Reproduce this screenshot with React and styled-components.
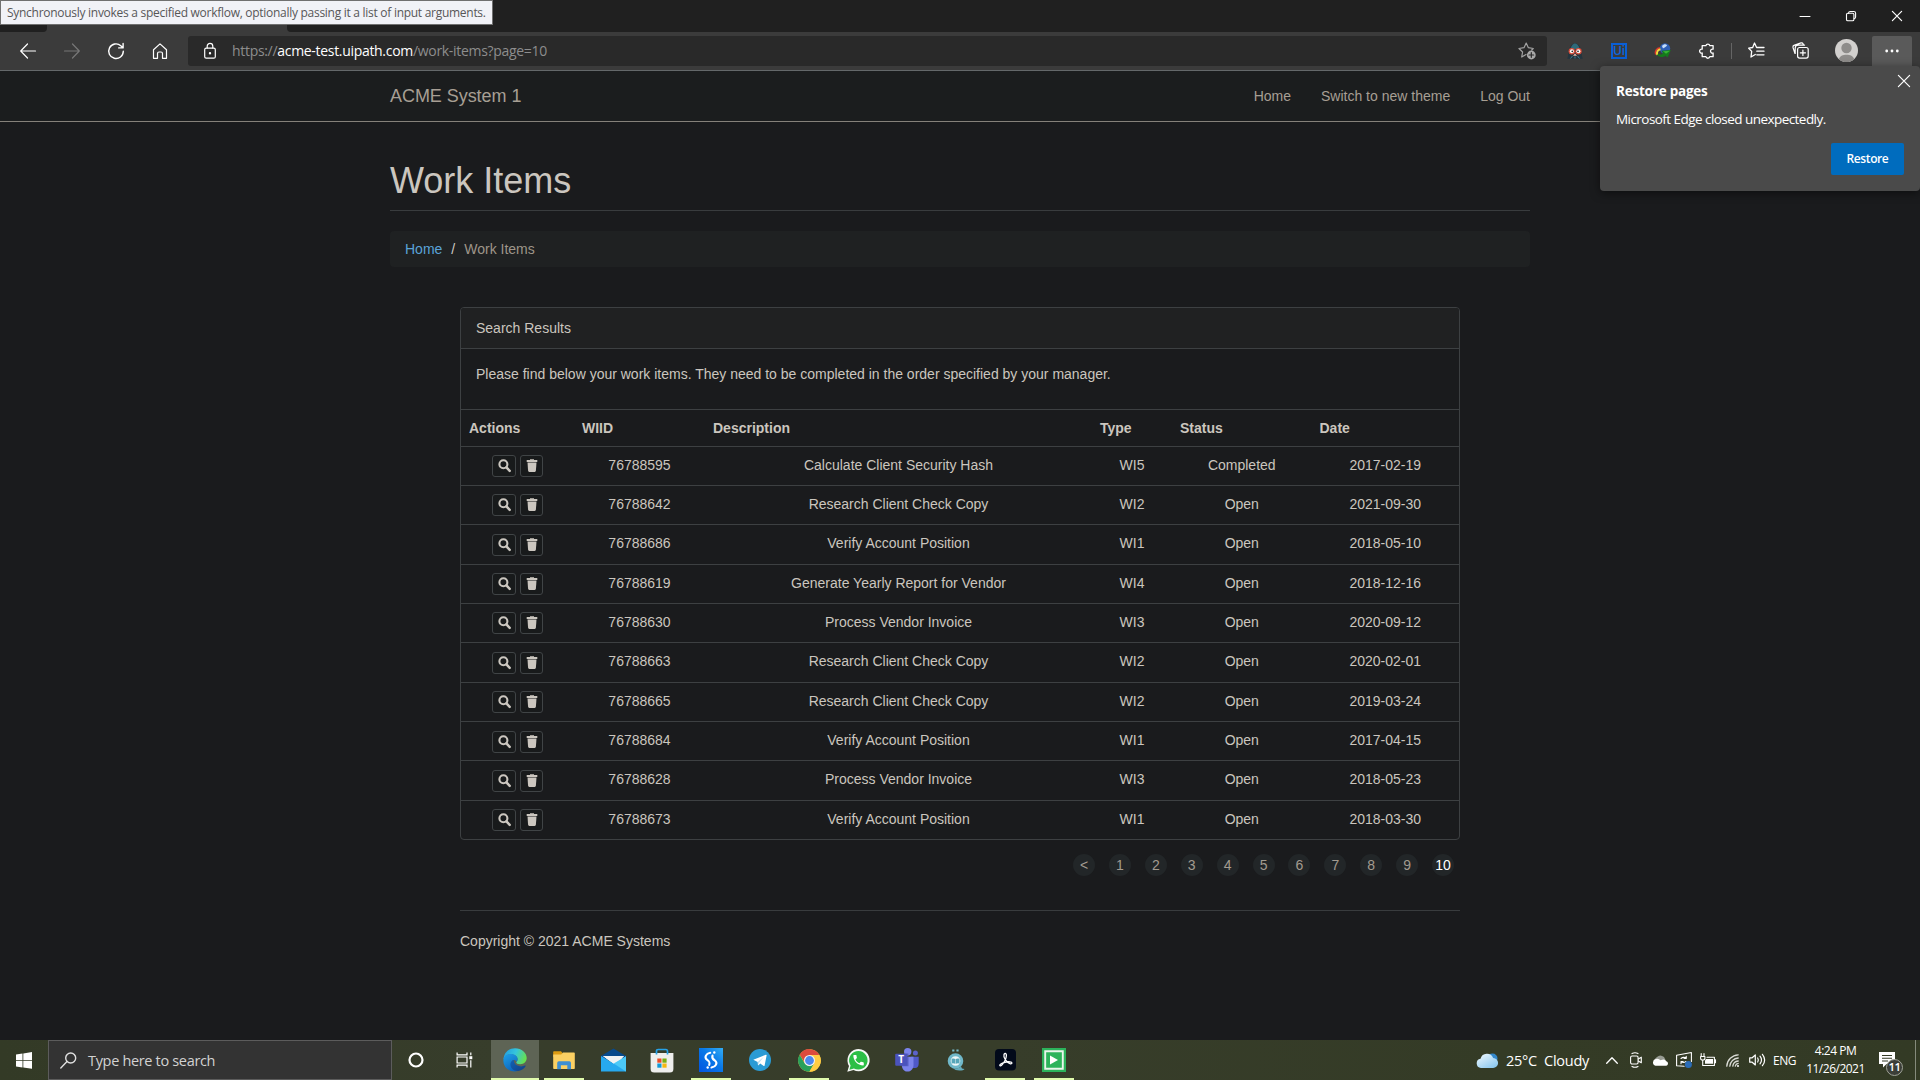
import React from "react";
import styled, { createGlobalStyle } from "styled-components";

const UI = '"Open Sans", "Noto Sans", sans-serif';
const PAGE = '"Liberation Sans", Arial, sans-serif';

const GlobalStyle = createGlobalStyle`
  *, *::before, *::after { box-sizing: border-box; }
  html, body { margin: 0; padding: 0; background: #1a1b1d; overflow: hidden; }
  svg { display: block; flex: none; overflow: visible; }
`;

const Screen = styled.div`
  position: relative;
  display: flex;
  flex-direction: column;
  width: 1920px;
  height: 1080px;
  overflow: hidden;
  background: #1a1b1d;
  font-family: ${UI};
`;

/* ---------- browser chrome ---------- */
const TitleBar = styled.header`
  display: flex;
  height: 32px;
  flex: none;
  background: #3b3b3b;
`;
const TabGap = styled.div`
  width: 47px;
  background: #202020;
  border-bottom-right-radius: 4px;
`;
const ActiveTab = styled.div`
  width: 240px;
  background: #3b3b3b;
`;
const TabStrip = styled.div`
  flex: 1;
  display: flex;
  justify-content: flex-end;
  background: #202020;
  border-bottom-left-radius: 4px;
`;
const WindowButton = styled.div`
  width: 46px;
  display: flex;
  align-items: center;
  justify-content: center;
`;
const Toolbar = styled.div`
  display: flex;
  align-items: center;
  height: 39px;
  flex: none;
  padding: 0 8px 1px 6px;
  background: #3b3b3b;
  border-bottom: 1px solid #64686a;
`;
const Slot = styled.div`
  width: ${(p) => p.$w || 44}px;
  height: 30px;
  display: flex;
  align-items: center;
  justify-content: center;
`;
const AddressBar = styled.div`
  display: flex;
  align-items: center;
  width: 1359px;
  height: 30px;
  margin: 0 6px;
  padding: 0 11px 0 16px;
  border-radius: 3px;
  background: #292929;
`;
const Url = styled.div`
  flex: 1;
  margin-left: 16px;
  font-size: 14px;
  line-height: 20px;
  letter-spacing: -0.31px;
  color: #8d8d8d;
  white-space: nowrap;
`;
const Host = styled.span`
  color: #ffffff;
`;
const Divider = styled.div`
  width: 1px;
  height: 16px;
  margin: 0 2px;
  background: #656565;
`;
const MoreButton = styled(Slot)`
  width: 40px;
  margin-left: 2px;
  border-radius: 2px 2px 0 0;
  background: #5a5a5a;
`;
const UiBadge = styled.div`
  width: 16px;
  height: 16px;
  display: flex;
  align-items: center;
  justify-content: center;
  border: 2px solid #0a5fd6;
  color: #0a67e0;
  font: 600 12px/12px ${UI};
`;
const Tooltip = styled.div`
  position: absolute;
  left: 0;
  top: 0;
  width: 493px;
  height: 25px;
  padding-left: 6px;
  border: 1px solid #707070;
  background: #f1f2f7;
  color: #575757;
  font-size: 12px;
  line-height: 23px;
  letter-spacing: -0.28px;
  white-space: nowrap;
`;
const Popup = styled.section`
  position: absolute;
  left: 1600px;
  top: 66px;
  width: 320px;
  height: 125px;
  padding: 15px 16px;
  display: flex;
  flex-direction: column;
  border-radius: 4px;
  background: #4a4a4a;
  color: #ffffff;
  box-shadow: 0 2px 10px rgba(0, 0, 0, 0.5);
`;
const PopupHead = styled.div`
  display: flex;
  height: 20px;
  justify-content: space-between;
  font-size: 13.5px;
  font-weight: 700;
  line-height: 20px;
  letter-spacing: -0.22px;
  svg { margin: -6px -6px 0 0; }
`;
const PopupText = styled.div`
  margin-top: 8px;
  font-size: 13.5px;
  line-height: 20px;
  letter-spacing: -0.55px;
`;
const RestoreButton = styled.div`
  width: 73px;
  height: 32px;
  margin: 14px 0 0 auto;
  border-radius: 2px;
  background: #006cbe;
  font-size: 12px;
  font-weight: 600;
  line-height: 32px;
  letter-spacing: -0.4px;
  text-align: center;
`;

/* ---------- page ---------- */
const Page = styled.main`
  flex: 1;
  font-family: ${PAGE};
  font-size: 14px;
  line-height: 20px;
  color: #cbc6bf;
`;
const Navbar = styled.nav`
  height: 51px;
  padding: 0 390px;
  display: flex;
  align-items: center;
  justify-content: space-between;
  background: #1b1d1e;
  border-bottom: 1px solid #85817a;
  color: #a79f94;
`;
const Brand = styled.div`
  font-size: 18px;
  letter-spacing: -0.05px;
`;
const NavLinks = styled.div`
  display: flex;
  gap: 30px;
`;
const Container = styled.div`
  width: 1140px;
  margin: 0 auto;
`;
const PageTitle = styled.h1`
  height: 89px;
  margin: 0 0 20px;
  padding-top: 39px;
  border-bottom: 1px solid #393c3e;
  font-size: 36px;
  font-weight: 400;
  line-height: 40px;
`;
const Breadcrumb = styled.div`
  display: flex;
  height: 36px;
  padding: 8px 15px;
  border-radius: 4px;
  background: #1f2122;
  color: #9e9589;
`;
const Crumb = styled.span`
  color: #5aa3d8;
`;
const Slash = styled.span`
  padding: 0 9px;
  color: #d0cbc4;
`;
const Column = styled.div`
  width: 1000px;
  margin: 40px auto 0;
`;
const Panel = styled.section`
  border: 1px solid #3d4042;
  border-radius: 4px;
  height: 533px;
  overflow: hidden;
`;
const PanelHeading = styled.div`
  height: 41px;
  padding: 10px 15px;
  background: #202122;
  border-bottom: 1px solid #3d4042;
`;
const PanelBody = styled.div`
  height: 59.6px;
  padding: 15px;
`;
const Row = styled.div`
  display: grid;
  grid-template-columns: 113px 131px 387px 80px 139.5px 147.5px;
  height: ${(p) => (p.$head ? "37px" : "39.37px")};
  border-top: 1px solid #3d4042;
`;
const HeadCell = styled.div`
  padding: 8px;
  font-weight: 700;
`;
const Cell = styled.div`
  padding: 8px;
  text-align: center;
`;
const Actions = styled.div`
  display: flex;
  gap: 4px;
  padding: 8.4px 0 0 31px;
`;
const IconButton = styled.div`
  width: ${(p) => p.$w}px;
  height: 22px;
  display: flex;
  align-items: center;
  justify-content: center;
  padding-bottom: 1px;
  border: 1px solid #404446;
  border-radius: 3px;
  background: #181a1b;
  color: #cbc6bf;
`;
const Pager = styled.div`
  display: flex;
  justify-content: flex-end;
  gap: 13.9px;
  margin: 14px 6px 0 0;
`;
const PageDot = styled.div`
  width: 22px;
  height: 22px;
  border-radius: 11px;
  background: #222628;
  color: ${(p) => (p.$active ? "#ffffff" : "#a39b90")};
  line-height: 22px;
  text-align: center;
`;
const Footer = styled.footer`
  margin-top: 34px;
  padding-top: 20px;
  border-top: 1px solid #393c3e;
`;

/* ---------- taskbar ---------- */
const Taskbar = styled.footer`
  display: flex;
  height: 40px;
  flex: none;
  background: linear-gradient(90deg, #333a26 0, #373d2b 500px, #373d2a 1000px, #343b26 1500px, #333a25 100%);
  color: #ffffff;
`;
const StartButton = styled.div`
  width: 48px;
  display: flex;
  align-items: center;
  padding-left: 16px;
`;
const SearchBox = styled.div`
  width: 344px;
  display: flex;
  align-items: center;
  gap: 11px;
  padding-left: 11px;
  border: 1px solid #5c5c5c;
  background: #333333;
  color: #d2d2d2;
  font-size: 14.5px;
  letter-spacing: -0.33px;
`;
const TaskIcon = styled.div`
  width: ${(p) => p.$w}px;
  height: 40px;
  display: flex;
  align-items: center;
  justify-content: center;
`;
const TaskApp = styled.div`
  width: ${(p) => (p.$active ? 48 : 40)}px;
  height: 40px;
  margin: ${(p) => (p.$active ? "0 0.5px 0 1px" : "0 4.5px")};
  display: flex;
  align-items: center;
  justify-content: center;
  background: ${(p) => (p.$active ? "#5e6455" : "transparent")};
  border-bottom: 2px solid ${(p) => (p.$open || p.$active ? "#e0fbad" : "transparent")};
  svg { margin-top: 2px; }
`;
const Tray = styled.div`
  flex: 1;
  display: flex;
  align-items: center;
  justify-content: flex-end;
`;
const Weather = styled.div`
  display: flex;
  align-items: center;
  width: 130px;
  font-size: 14.5px;
  letter-spacing: -0.25px;
  white-space: nowrap;
  svg { margin-right: 8px; }
`;
const Temp = styled.span`
  width: 38px;
`;
const Cloudy = styled.span``;
const TrayIcon = styled.div`
  width: ${(p) => p.$w}px;
  display: flex;
  justify-content: center;
`;
const Lang = styled.div`
  width: 41px;
  text-align: center;
  font-size: 12px;
  letter-spacing: -0.4px;
`;
const Clock = styled.div`
  width: 61px;
  text-align: center;
  font-size: 12px;
  line-height: 18px;
  letter-spacing: -0.5px;
  white-space: nowrap;
`;
const Notice = styled.div`
  position: relative;
  width: 49px;
  height: 40px;
  padding: 12px 0 0 13px;
`;
const NoticeCount = styled.div`
  position: absolute;
  left: 20px;
  top: 19px;
  width: 17px;
  height: 17px;
  border: 1px solid #a0a398;
  border-radius: 50%;
  background: #3b3e38;
  font: 600 11.5px/14px ${UI};
  letter-spacing: -0.6px;
  text-align: center;
`;
const ShowDesktop = styled.div`
  width: 5px;
  height: 40px;
  border-left: 1px solid #858a7c;
`;

/* ---------- icons ---------- */
const Line = ({ w = 16, h = w, c = "#fff", s = 1.2, children, ...rest }) => (
  <svg width={w} height={h} viewBox={`0 0 ${w} ${h}`} fill="none" stroke={c} strokeWidth={s} strokeLinecap="round" strokeLinejoin="round" {...rest}>
    {children}
  </svg>
);
const Back = () => <Line><path d="M15.5 8H.8M7.500 1 .7 8l6.800 7" /></Line>;
const Forward = () => <Line c="#777"><path d="M.5 8h14.700M8.500 1l6.800 7-6.800 7" /></Line>;
const Refresh = () => <Line s={1.4}><path d="M15.300 8.200A7.300 7.300 0 1 1 12.800 2.700L15 4.800M15.100.5v4.400h-4.400" /></Line>;
const Home = () => <Line w={16}><path d="M1.500 6.800 8 .9l6.500 5.900V15.300H10.500V10.500Q10.500 9 9 9H7Q5.500 9 5.500 10.500V15.300H1.500Z" /></Line>;
const Lock = () => <Line w={12} h={16}><rect x=".7" y="5.200" width="10.600" height="10" rx="1.500" /><path d="M3.200 5V3.200a2.800 2.800 0 0 1 5.600 0V5" /><circle cx="6" cy="10.200" r=".6" fill="#fff" /></Line>;
const AddFavorite = () => (
  <Line w={18} c="#a2a2a2">
    <path d="M8 12.500 3.700 15l.9-5L1 6.500l5-.8L8.200 1l2.200 4.700 4.900.8-1.600 1.500" />
    <circle cx="13.300" cy="13" r="4.400" fill="#a8a8a8" stroke="none" />
    <path d="M13.300 10.700v4.600M11 13h4.600" stroke="#292929" />
  </Line>
);
const Raven = () => (
  <svg width="16" height="16" viewBox="0 0 16 16">
    <path d="M.3 15.700C1.800 12 .8 8.500 2.500 5 4 1.800 5.800.3 8 .3s4 1.500 5.500 4.700C15.200 8.500 14.200 12 15.800 15.700Z" fill="#24353f" />
    <path d="M3.500 6C4.500 2 6.500.5 8.100.5s3.500 1.500 4.600 5.500Z" fill="#2e6a7a" />
    <circle cx="4.800" cy="8.200" r="3.200" fill="#d84c38" /><circle cx="11.500" cy="8.200" r="3.200" fill="#d84c38" />
    <circle cx="4.900" cy="8.200" r="2" fill="#fff" /><circle cx="11.400" cy="8.200" r="2" fill="#fff" />
    <circle cx="5.300" cy="8.300" r=".9" fill="#333" /><circle cx="11" cy="8.300" r=".9" fill="#333" />
    <path d="m6 12.800 2-2.300 2 2.300Z" fill="#f4b9a8" />
    <path d="M3.500 15.500 5.500 13M8 15.500V13.500M12.500 15.500 10.500 13" stroke="#3c7d90" strokeWidth="1" />
  </svg>
);
const Idm = () => (
  <svg width="16" height="15" viewBox="0 0 16 15">
    <circle cx="10" cy="5.500" r="5.200" fill="#2e5fb4" /><path d="M7 3C8.500.8 11 .8 11.800 2S9.500 4.500 8 5.500Z" fill="#c4dcfa" />
    <path d="M.8 11.500C-.5 8 2 5.200 5 4.800" fill="none" stroke="#d8382e" strokeWidth="1.700" />
    <path d="M2.300 12C1.300 8.700 3 6.700 5.500 6.200" fill="none" stroke="#f0d83c" strokeWidth="1.900" />
    <path d="M3 10.500c1.500 1.300 3.500 1.300 5-.3L6.500 7.800l9.300-.8-3.200 7.500-2-1.800C8 14.800 4.500 14.300 2.300 12.200Z" fill="#157a1c" />
    <path d="m8 8.300 7-.6-4 3Z" fill="#38b534" />
  </svg>
);
const Puzzle = () => <Line s={1.3}><path d="M5.300 2.600h1.600a2 2 0 0 1 3.900 0h3.300v3.600a2 2 0 1 0 0 3.800v3.700h-3.300a2 2 0 0 1-3.900 0H3.200v-3.700a2 2 0 1 1 0-3.800V2.600Z" /></Line>;
const Favorites = () => <Line w={17} s={1.3}><path d="M8.600 5.500 6.500 1 4.700 5.500.7 6.200l3 3.200L3 15l4.300-2.500M8.700 5.500H16M8.800 9.200H16M8.800 12.800H16" /></Line>;
const Collections = () => <Line w={17} s={1.2}><rect x="5.600" y="5.500" width="10.600" height="10.600" rx="2" /><path d="M10.900 8.200v5.200M8.300 10.800h5.200M3 11.500 1 5.500Q.6 4 2 3.400L9 .9q1.500-.4 2 .8l.4 1.100M3.200 11.400V6Q3.300 3.200 6 3.100h6.600" /></Line>;
const Avatar = () => (
  <svg width="23" height="23" viewBox="0 0 23 23"><defs><clipPath id="av"><circle cx="11.500" cy="11.500" r="11.500" /></clipPath></defs>
    <g clipPath="url(#av)"><rect width="23" height="23" fill="#d2d0ce" /><circle cx="11.500" cy="9" r="5.200" fill="#8e8c8a" /><path d="M3.500 21.500C4.500 16.800 8 15.800 11.500 15.800s7 1 8 5.700c-3 2-13 2-16 0Z" fill="#8e8c8a" /></g></svg>
);
const Dots = () => <svg width="14" height="4" viewBox="0 0 14 4" fill="#fff"><circle cx="1.700" cy="2" r="1.400" /><circle cx="7" cy="2" r="1.400" /><circle cx="12.300" cy="2" r="1.400" /></svg>;
const Cross = ({ size = 10 }) => <Line w={size} s={1.2}><path d={`M.4.4 ${size - 0.4} ${size - 0.4}M${size - 0.4} .4.4 ${size - 0.4}`} /></Line>;
const Minimize = () => <Line w={10}><path d="M0 5.500h10" strokeWidth="1" /></Line>;
const RestoreWin = () => <Line w={10} s={1.1}><rect x=".5" y="2.300" width="7.400" height="7.400" rx="1.300" /><path d="M2.500 2.200Q2.600.5 4.200.5h3.600q1.800 0 1.800 1.800v3.700q0 1.500-1.600 1.700" /></Line>;

const SearchGlyph = () => <svg width="13" height="13" viewBox="0 0 13 13" fill="none" stroke="currentColor"><circle cx="5.400" cy="5.200" r="4" strokeWidth="2.100" /><path d="m8.400 8.400 3.300 3.400" strokeWidth="2.500" strokeLinecap="round" /></svg>;
const TrashGlyph = () => <svg width="12" height="13" viewBox="0 0 12 13" fill="currentColor"><path d="M4 1V.2h4V1h3.300v2.100H.7V1Z" /><path d="M1.500 3.400h9L9.900 11.800q-.1 1.100-1.200 1.100H3.300q-1.100 0-1.200-1.100Z" /></svg>;

const WindowsLogo = () => <svg width="16" height="17" viewBox="0 0 16 17" fill="#fff"><path d="M0 2.400 6.500 1.500V8H0ZM7.300 1.400 16 .1V8H7.300ZM0 8.800h6.500v6.600L0 14.500ZM7.300 8.800H16v8l-8.700-1.300Z" /></svg>;
const TaskSearch = () => <Line w={17} c="#e0e0e0" s={1.4}><circle cx="10.700" cy="6" r="5" /><path d="M7 9.600.8 16" /></Line>;
const Cortana = () => <svg width="16" height="16" viewBox="0 0 16 16"><circle cx="8" cy="8" r="6.500" fill="none" stroke="#fff" strokeWidth="2.200" /></svg>;
const TaskView = () => <svg width="16" height="16" viewBox="0 0 16 16" fill="none" stroke="#fff" strokeWidth="1.200"><path d="M.1.5v2.300h9.900V.5M.1 15.500v-2.300h9.900v2.300M.1 5h9.900v6H.1ZM13.800.5v2.800M13.800 8.300v7.200" /><path d="M12.300 4.200h3v3h-3Z" fill="#fff" stroke="none" /></svg>;

const Edge = () => (
  <svg width="24" height="24" viewBox="0 0 25 25">
    <defs>
      <linearGradient id="e1" x1="0" y1=".2" x2="1" y2=".5"><stop offset="0" stopColor="#239de0" /><stop offset=".5" stopColor="#35c5dc" /><stop offset="1" stopColor="#67e04f" /></linearGradient>
      <linearGradient id="e2" x1="0" y1="0" x2=".5" y2="1"><stop offset="0" stopColor="#1fa1e8" /><stop offset="1" stopColor="#0d66bd" /></linearGradient>
      <linearGradient id="e3" x1="0" y1="0" x2="1" y2="1"><stop offset="0" stopColor="#1262b5" /><stop offset="1" stopColor="#123f84" /></linearGradient>
    </defs>
    <path d="M.5 12C1 4.500 6 .2 12.500.2c7 0 12.200 4.800 12.200 10.300 0 4-3 6.300-6.700 6.300-3 0-4.200-1-4.200-1.800s1.400-1.200 1.400-3.300c0-3-3-5.200-6.800-5.200C4.500 6.500 1.500 8.500.5 12Z" fill="url(#e1)" />
    <path d="M.4 12.500C.7 8.500 4 6.300 8.200 6.300c3.900 0 7 2.300 7 5.400 0 1.200-.6 2-1.100 2.500-.9-1.600-2.500-2-3.800-1.400-2.300 1.100-2.400 5.300.1 8 1.500 1.700 3.800 2.600 6 2.900C8 26.500 0 21 .4 12.500Z" fill="url(#e2)" />
    <path d="M10.300 12.800c-3.300 1.700-3.300 6-.7 8.900 2.100 2.400 5 2.700 7.500 2 2.900-.9 5.200-2.700 6.400-4.700.4-.6-.1-1-.7-.7-4.300 2-9.700.2-10.900-2.900-.5-1.200-.4-2.300 0-2.900Z" fill="url(#e3)" />
  </svg>
);
const Explorer = () => <svg width="22" height="19" viewBox="0 0 22 19"><path d="M.2 1Q.2.2 1 .2h7L9.500 2v4H.2Z" fill="#de9c12" /><path d="M.2 3.500h8L10 1.500h11q.8 0 .8.800v15q0 .8-.8.800H1q-.8 0-.8-.8Z" fill="#fbd063" /><path d="M4.200 18.200V12q0-1.700 1.700-1.700h10.500Q18 10.300 18 12v6.200h-3.700v-4H7.900v4Z" fill="#3f8fd2" /></svg>;
const Mail = () => <svg width="25" height="24" viewBox="0 0 25 24"><path d="M0 8 12.500.5 25 8v4H0Z" fill="#07498c" /><path d="M2 8h21l-8 10Z" fill="#f0f2f4" /><path d="M0 8 13.500 16 25 8.200V23.500H0Z" fill="#27a9ef" /><path d="M2 8h21L12.700 15.500Z" fill="#f0f2f4" /><path d="M25 8.200V23.500L12.700 15.500Z" fill="#4cc9f8" /></svg>;
const Store = () => <svg width="24" height="25" viewBox="0 0 24 25"><path d="M.6 5h22.800v16q0 3.500-3.500 3.500H4.100Q.6 24.500.6 21Z" fill="#eeeeed" /><path d="M6.500 6.500V3.200Q6.500 1.500 8.200 1.500h7.600q1.700 0 1.700 1.700v3.300" fill="none" stroke="#27a2e8" strokeWidth="1.700" /><path d="M7.300 10.500h4.200v4.200H7.300Z" fill="#ec4b27" /><path d="M12.400 10.500h4.200v4.200h-4.200Z" fill="#78af14" /><path d="M7.300 15.500h4.200v4.200H7.300Z" fill="#119ad9" /><path d="M12.400 15.500h4.200v4.200h-4.200Z" fill="#f5b811" /></svg>;
const Studio = () => <svg width="24" height="24" viewBox="0 0 24 24"><defs><linearGradient id="st" x1="0" y1="1" x2="1" y2="0"><stop stopColor="#0253df" /><stop offset=".55" stopColor="#0878e8" /><stop offset="1" stopColor="#33aef5" /></linearGradient></defs><path d="M0 0h24v24H0Z" fill="url(#st)" /><path d="M11.200 4.800C7 5.500 5 9.300 8 11.700c2 1.500 3.200 2 2.200 5.300M13.500 7.500c-1 2.800.3 3.700 2.400 5 3 2.300 1.200 6.300-3.400 7" fill="none" stroke="#fff" strokeWidth="2.100" strokeLinecap="round" /><circle cx="8.700" cy="19.500" r="1.200" fill="#fff" /><circle cx="15.300" cy="4.500" r="1.200" fill="#fff" /></svg>;
const Telegram = () => <svg width="22" height="22" viewBox="0 0 22 22"><circle cx="11" cy="11" r="11" fill="#2a9bd5" /><path d="m4.300 10.800 12.500-5q1-.3.800.8l-2 9.800q-.2 1-1.200.4l-3.200-2.300-1.700 1.700q-.5.500-.6-.5l-.2-2.800Z" fill="#fff" /><path d="m8.700 12.900 6-5.100-4.700 6.100-.5 2.300Z" fill="#bddff1" /></svg>;
const Chrome = () => (
  <svg width="23" height="23" viewBox="0 0 23 23">
    <circle cx="11.500" cy="11.500" r="11.300" fill="#ffcd43" />
    <path d="M1.700 5.700A11.300 11.300 0 0 1 21.300 5.900H11.500L7 14Z" fill="#dc4b3e" />
    <path d="M1.700 5.700A11.300 11.300 0 0 0 11.400 22.800L16.300 14.300 11.500 17.200 6.600 14.300Z" fill="#28a05b" />
    <path d="M11.400 22.800A11.300 11.300 0 0 0 21.300 5.900H11.500l4.900 8.400Z" fill="#ffcd43" />
    <circle cx="11.500" cy="11.500" r="5.500" fill="#f2f2f2" /><circle cx="11.500" cy="11.500" r="4.400" fill="#4c88ee" />
  </svg>
);
const WhatsApp = () => <svg width="23" height="23" viewBox="0 0 23 23"><path d="M.3 22.700 2 16.900A11.100 11.100 0 1 1 6.500 21.100Z" fill="#f6f8f6" /><path d="m2.400 20.700 1.200-4.200A9.300 9.300 0 1 1 6.900 19.500Z" fill="#2cbf46" /><g transform="translate(4.600 4.200) scale(.58)"><path d="M6.620 10.790c1.440 2.830 3.760 5.140 6.590 6.590l2.200-2.200c.27-.27.67-.36 1.020-.24 1.120.37 2.330.57 3.570.57.55 0 1 .45 1 1V20c0 .55-.45 1-1 1-9.390 0-17-7.610-17-17 0-.55.45-1 1-1h3.500c.55 0 1 .45 1 1 0 1.250.2 2.450.57 3.570.11.35.03.74-.25 1.020l-2.200 2.200z" fill="#fff" /></g></svg>;
const TLetter = styled.text`
  font: 700 10px ${UI};
`;
const Teams = () => <svg width="24" height="24" viewBox="0 0 24 24"><circle cx="20.400" cy="5" r="2.500" fill="#5b62c9" /><path d="M16 8.700h7.700v7c0 3-2 4.500-4 4.200H16Z" fill="#5059c9" /><circle cx="12.700" cy="3.800" r="3.700" fill="#7b83eb" /><path d="M7 8.700h11.500V17c0 4-2.700 6.600-6 6.600S6.800 21 6.800 17Z" fill="#7b83eb" /><path d="M7 8.700h6.500v9.500H7ZM9.400 5.500h4v2h-3.200Z" fill="#5860c4" /><rect x=".2" y="5.800" width="12" height="12" rx="1" fill="#4b53bc" /><TLetter x="6.200" y="15.400" textAnchor="middle" fill="#fff">T</TLetter></svg>;
const QBook = () => <svg width="18" height="22" viewBox="0 0 18 22"><circle cx="8.500" cy="12" r="6.300" fill="#eef7f8" stroke="#70b8c9" strokeWidth="3" /><path d="M6 19c4 1 6 0 8-1.500l1 2 2.500.5q-1 1.500-5 1.500Q8 21.500 6 19Z" fill="#65acbd" /><path d="M4.600 9.700q2.200-.8 3.700.4v4.700q-1.600-1-3.700-.4ZM8.800 10.100q1.600-1.200 3.700-.4v4.700q-2.100-.6-3.700.4Z" fill="#57a6b9" /><path d="M5.200.6h2.200v2H5.200ZM9.400.6h2.200v2H9.400Z" fill="#76bac9" /></svg>;
const Acrobat = () => <svg width="21" height="22" viewBox="0 0 21 22"><rect width="21" height="21.500" rx="4" fill="#020a1a" /><path d="M10 4.500C12 4.200 11.700 8 10 11.500S5.500 18 4.800 16.500s6-4 10-3.700c3.200.3 2.200 2.600.2 1.900-3-1-7-6.200-6-9.200q.3-.9 1-1Z" fill="none" stroke="#fff" strokeWidth="1.300" /></svg>;
const Camtasia = () => <svg width="24" height="24" viewBox="0 0 24 24"><path d="M0 0h24v24H0Z" fill="#2cb35b" /><path d="M3.200 3.200h17.600v17.600H3.200Z" fill="none" stroke="#e9f5ec" strokeWidth="1.900" /><path d="M8 7.500v9l8-4.500Z" fill="#fff" /></svg>;
const CloudIcon = () => <svg width="22" height="15" viewBox="0 0 22 15"><defs><linearGradient id="cl" x1="0" y1="0" x2=".8" y2="1"><stop stopColor="#f2faff" /><stop offset="1" stopColor="#8bc8ef" /></linearGradient></defs><circle cx="16.500" cy="5.500" r="5" fill="#3388cb" /><path d="M5 15a4.700 4.700 0 0 1-.5-9.300A6.700 6.700 0 0 1 17.200 5a5 5 0 0 1-.2 10Z" fill="url(#cl)" /></svg>;
const Chevron = () => <Line w={12} h={7} s={1.3}><path d="m.7 6.300 5.300-5.500 5.300 5.500" /></Line>;
const MeetNow = () => <Line w={12} h={16} s={1.1}><rect x=".6" y="4" width="7.500" height="8" rx="1.500" /><path d="m8.300 7 3-1.800v5.600l-3-1.800M2 1.600Q5 0 8 1.600M2 14.400q3 1.600 6 0" /></Line>;
const OneDrive = () => <svg width="17" height="11" viewBox="0 0 17 11"><path d="M2.500 8A5.300 5.300 0 0 1 5 2Q8-1.200 12 2l1.500 3Z" fill="#979b92" /><path d="M3.500 10.800a3.500 3.500 0 0 1 .3-6.800Q6.500 3 8.500 5.200q4.500-2 5.800 1a2.400 2.400 0 0 1 0 4.600Z" fill="#fff" /></svg>;
const UpdateIcon = () => <Line w={16} h={16} s={1.1}><path d="M.6 3.200 15.400.5v9M.6 3.200v10.500l7.500.5M5 6.500q2.700-2.300 5.200 0V4.300M10.200 6.500H8M10 9.500q-2.500 2-5 0v2.200M5 9.500h2.200" /><circle cx="12.400" cy="12.500" r="3.500" fill="#2a6cb8" stroke="none" /></Line>;
const Battery = () => <Line w={16} h={14} s={1.1}><path d="M1.200.5v3M4 .5v3M.6 3.500h4.300V5.200Q4.900 7 2.700 7 .6 7 .6 5.200ZM2.700 7v5.500h11.700V4.200H7M14.500 6.800h1v3h-1" /><path d="M6 6h7v4.800H5V7.500Z" fill="#fff" stroke="none" /></Line>;
const Wifi = () => <Line w={13} h={13} s={1.3} c="#dadcd6"><path d="M.8 12.200A12 12 0 0 1 12.200.8M3.800 12.200A9 9 0 0 1 12.200 4M6.800 12.200a6 6 0 0 1 5.400-5.200M9.300 12.200a3.500 3.500 0 0 1 2.900-2.800" /><circle cx="12" cy="12" r="1" fill="#fff" stroke="none" /></Line>;
const Speaker = () => <Line w={17} h={14} s={1.2}><path d="M.7 4.800h2.500L6.300 2v10L3.200 9.200H.7ZM8.700 5q1.300 2 0 4M11 3.200q3 3.800 0 7.600M13.400 1.300q4.500 5.700 0 11.400" /></Line>;
const NoticeGlyph = () => <svg width="16" height="16" viewBox="0 0 16 16"><path d="M0 0h16v12H7.500L4 15.500V12H0Z" fill="#fff" /><path d="M3 3.500h10M3 6.200h10M3 9h6" stroke="#343b26" strokeWidth="1.100" /></svg>;

/* ---------- data ---------- */
const HEADS = ["Actions", "WIID", "Description", "Type", "Status", "Date"];
const ITEMS = [
  ["76788595", "Calculate Client Security Hash", "WI5", "Completed", "2017-02-19"],
  ["76788642", "Research Client Check Copy", "WI2", "Open", "2021-09-30"],
  ["76788686", "Verify Account Position", "WI1", "Open", "2018-05-10"],
  ["76788619", "Generate Yearly Report for Vendor", "WI4", "Open", "2018-12-16"],
  ["76788630", "Process Vendor Invoice", "WI3", "Open", "2020-09-12"],
  ["76788663", "Research Client Check Copy", "WI2", "Open", "2020-02-01"],
  ["76788665", "Research Client Check Copy", "WI2", "Open", "2019-03-24"],
  ["76788684", "Verify Account Position", "WI1", "Open", "2017-04-15"],
  ["76788628", "Process Vendor Invoice", "WI3", "Open", "2018-05-23"],
  ["76788673", "Verify Account Position", "WI1", "Open", "2018-03-30"],
];
const PAGES = ["<", "1", "2", "3", "4", "5", "6", "7", "8", "9", "10"];
const APPS = [
  [Edge, "active"], [Explorer, "open"], [Mail], [Store], [Studio, "open"], [Telegram],
  [Chrome, "open"], [WhatsApp], [Teams], [QBook], [Acrobat, "open"], [Camtasia, "open"],
];

export default function App() {
  return (
    <Screen>
      <GlobalStyle />
      <TitleBar>
        <TabGap />
        <ActiveTab />
        <TabStrip>
          <WindowButton><Minimize /></WindowButton>
          <WindowButton><RestoreWin /></WindowButton>
          <WindowButton><Cross /></WindowButton>
        </TabStrip>
      </TitleBar>
      <Toolbar>
        <Slot><Back /></Slot>
        <Slot><Forward /></Slot>
        <Slot><Refresh /></Slot>
        <Slot><Home /></Slot>
        <AddressBar>
          <Lock />
          <Url>https://<Host>acme-test.uipath.com</Host>/work-items?page=10</Url>
          <AddFavorite />
        </AddressBar>
        <Slot><Raven /></Slot>
        <Slot><UiBadge>Ui</UiBadge></Slot>
        <Slot><Idm /></Slot>
        <Slot><Puzzle /></Slot>
        <Divider />
        <Slot><Favorites /></Slot>
        <Slot><Collections /></Slot>
        <Slot $w={48}><Avatar /></Slot>
        <MoreButton><Dots /></MoreButton>
      </Toolbar>

      <Page>
        <Navbar>
          <Brand>ACME System 1</Brand>
          <NavLinks>
            <span>Home</span>
            <span>Switch to new theme</span>
            <span>Log Out</span>
          </NavLinks>
        </Navbar>
        <Container>
          <PageTitle>Work Items</PageTitle>
          <Breadcrumb>
            <Crumb>Home</Crumb>
            <Slash>/</Slash>
            <span>Work Items</span>
          </Breadcrumb>
          <Column>
            <Panel>
              <PanelHeading>Search Results</PanelHeading>
              <PanelBody>
                Please find below your work items. They need to be completed in the order specified by your manager.
              </PanelBody>
              <Row $head>
                {HEADS.map((h) => <HeadCell key={h}>{h}</HeadCell>)}
              </Row>
              {ITEMS.map((item) => (
                <Row key={item[0]}>
                  <Actions>
                    <IconButton $w={24}><SearchGlyph /></IconButton>
                    <IconButton $w={23}><TrashGlyph /></IconButton>
                  </Actions>
                  {item.map((v) => <Cell key={v}>{v}</Cell>)}
                </Row>
              ))}
            </Panel>
            <Pager>
              {PAGES.map((p) => <PageDot key={p} $active={p === "10"}>{p}</PageDot>)}
            </Pager>
            <Footer>Copyright © 2021 ACME Systems</Footer>
          </Column>
        </Container>
      </Page>

      <Taskbar>
        <StartButton><WindowsLogo /></StartButton>
        <SearchBox><TaskSearch /><span>Type here to search</span></SearchBox>
        <TaskIcon $w={48}><Cortana /></TaskIcon>
        <TaskIcon $w={50}><TaskView /></TaskIcon>
        {APPS.map(([Icon, state], i) => (
          <TaskApp key={i} $active={state === "active"} $open={state === "open"}><Icon /></TaskApp>
        ))}
        <Tray>
          <Weather><CloudIcon /><Temp>25°C</Temp><Cloudy>Cloudy</Cloudy></Weather>
          <TrayIcon $w={12}><Chevron /></TrayIcon>
          <TrayIcon $w={36}><MeetNow /></TrayIcon>
          <TrayIcon $w={12}><OneDrive /></TrayIcon>
          <TrayIcon $w={36}><UpdateIcon /></TrayIcon>
          <TrayIcon $w={12}><Battery /></TrayIcon>
          <TrayIcon $w={37}><Wifi /></TrayIcon>
          <TrayIcon $w={13}><Speaker /></TrayIcon>
          <Lang>ENG</Lang>
          <Clock>4:24 PM<br />11/26/2021</Clock>
          <Notice><NoticeGlyph /><NoticeCount>11</NoticeCount></Notice>
          <ShowDesktop />
        </Tray>
      </Taskbar>

      <Popup>
        <PopupHead><span>Restore pages</span><Cross size={12} /></PopupHead>
        <PopupText>Microsoft Edge closed unexpectedly.</PopupText>
        <RestoreButton>Restore</RestoreButton>
      </Popup>
      <Tooltip>Synchronously invokes a specified workflow, optionally passing it a list of input arguments.</Tooltip>
    </Screen>
  );
}
